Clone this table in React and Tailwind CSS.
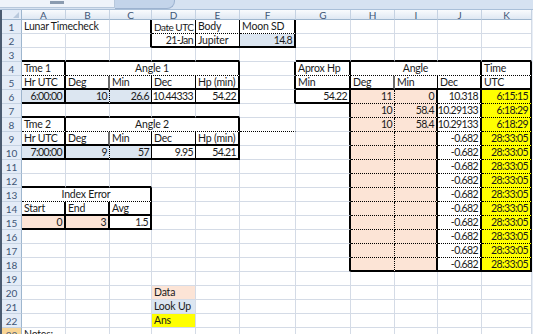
import React from 'react';

const COLS = ['A', 'B', 'C', 'D', 'E', 'F', 'G', 'H', 'I', 'J', 'K'];

const BLUE = 'bg-[#dce6f1]';
const PEACH = 'bg-[#fce4d6]';
const YELLOW = 'bg-[#ffff00]';

// border edges: g gridline, t thin, m medium, d dotted, s medium grey, n none
const RIGHT = {
  g: '[border-right:1px_solid_#d4dbe6]',
  t: '[border-right:1px_solid_#000]',
  m: '[border-right:2px_solid_#000]',
  s: '[border-right:2px_solid_#6b6b6b]',
  d: '[border-right:1px_dotted_#000]',
  n: '[border-right:1px_solid_transparent]',
};
const BOTTOM = {
  g: '[border-bottom:1px_solid_#d4dbe6]',
  t: '[border-bottom:1px_solid_#000]',
  m: '[border-bottom:2px_solid_#000]',
  d: '[border-bottom:1px_dotted_#000]',
};
const SPAN = { 1: '', 2: 'col-span-2', 3: 'col-span-3', 4: 'col-span-4' };
const ALIGN = {
  l: 'justify-start',
  r: 'justify-end',
  c: 'justify-center',
};
const TEXT = {
  l: 'text-[10.5px] tracking-[-0.2px]',
  c: 'text-[10.5px] tracking-[-0.2px]',
  r: 'text-[10.5px] tracking-[-0.6px]',
  narrow: 'text-[10px] tracking-[-0.5px]',
};

function buildCells() {
  const cells = {};
  for (let r = 1; r <= 23; r++) {
    COLS.forEach((c) => {
      cells[c + r] = { b: 'g', r: 'g', a: 'l' };
    });
  }
  const set = (ref, props) => Object.assign(cells[ref], props);
  const num = (ref, v, bg) => set(ref, { v, a: 'r', bg });

  // header block D1:F2
  set('A1', { v: 'Lunar Timecheck', r: 'n' });
  set('C1', { r: 'm' });
  set('C2', { r: 'm' });
  set('D1', { v: 'Date UTC', b: 'd', r: 't', font: 'narrow' });
  set('E1', { v: 'Body', b: 'd', r: 't' });
  set('F1', { v: 'Moon SD', b: 'd', r: 'm' });
  set('D2', { v: '21-Jan', a: 'r', b: 'm', r: 't' });
  set('E2', { v: 'Jupiter', b: 'm', r: 't' });
  set('F2', { v: '14.8', a: 'r', b: 'm', r: 'm', bg: BLUE });

  // angle boxes
  const angleBox = (top, label, time, vals) => {
    ['A', 'B', 'C', 'D', 'E'].forEach((c) => set(c + (top - 1), { b: 'm' }));
    set('A' + top, { v: label, b: 'd', r: 'm' });
    set('B' + top, { v: 'Angle ' + label.slice(-1), a: 'c', b: 'd', r: 'm', span: 4 });
    ['C', 'D', 'E'].forEach((c) => set(c + top, { skip: true }));
    const h = top + 1;
    set('A' + h, { v: 'Hr UTC', b: 'm', r: 'm' });
    set('B' + h, { v: 'Deg', b: 'm', r: 's' });
    set('C' + h, { v: 'Min', b: 'm', r: 't' });
    set('D' + h, { v: 'Dec', b: 'm', r: 't' });
    set('E' + h, { v: 'Hp (min)', b: 'm', r: 'm' });
    const d = top + 2;
    set('A' + d, { v: time, a: 'r', b: 'm', r: 'm', bg: BLUE });
    set('B' + d, { v: vals[0], a: 'r', b: 'm', r: 'd', bg: BLUE });
    set('C' + d, { v: vals[1], a: 'r', b: 'm', r: 't', bg: BLUE });
    set('D' + d, { v: vals[2], a: 'r', b: 'm', r: 't' });
    set('E' + d, { v: vals[3], a: 'r', b: 'm', r: 'm' });
  };
  angleBox(4, 'Tme 1', '6:00:00', ['10', '26.6', '10.44333', '54.22']);
  angleBox(8, 'Tme 2', '7:00:00', ['9', '57', '9.95', '54.21']);
  set('F8', { b: 'd' });

  // Aprox Hp box
  set('G3', { b: 'm' });
  ['F4', 'F5', 'F6'].forEach((k) => set(k, { r: 'm' }));
  set('G4', { v: 'Aprox Hp', b: 'd', r: 'm' });
  set('G5', { v: 'Min', b: 'm', r: 'm' });
  set('G6', { v: '54.22', a: 'r', b: 'm', r: 'm' });

  // result table H4:K18
  ['H3', 'I3', 'J3', 'K3'].forEach((k) => set(k, { b: 'm' }));
  set('H4', { v: 'Angle', a: 'c', b: 'd', r: 'm', span: 3 });
  set('I4', { skip: true });
  set('J4', { skip: true });
  set('K4', { v: 'Time', b: 'd', r: 'm' });
  set('H5', { v: 'Deg', b: 'm', r: 's' });
  set('I5', { v: 'Min', b: 'm', r: 't' });
  set('J5', { v: 'Dec', b: 'm', r: 'm' });
  set('K5', { v: 'UTC', b: 'm', r: 'm' });
  const rows = {
    6: ['11', '0', '10.318', '6:15:15'],
    7: ['10', '58.4', '10.29133', '6:18:29'],
    8: ['10', '58.4', '10.29133', '6:18:29'],
  };
  for (let r = 6; r <= 18; r++) {
    const vals = rows[r] || ['', '', '-0.682', '28:33:05'];
    const b = r === 18 ? 'm' : 'd';
    set('G' + r, { r: 'm' });
    set('H' + r, { v: vals[0], a: 'r', b, r: 'd', bg: PEACH });
    set('I' + r, { v: vals[1], a: 'r', b, r: 'm', bg: PEACH });
    set('J' + r, { v: vals[2], a: 'r', b, r: 'm' });
    set('K' + r, { v: vals[3], a: 'r', b, r: 'm', bg: YELLOW });
  }

  // index error
  ['A12', 'B12', 'C12'].forEach((k) => set(k, { b: 'm' }));
  set('A13', { v: 'Index Error', a: 'c', b: 'd', r: 'm', span: 3 });
  set('B13', { skip: true });
  set('C13', { skip: true });
  set('A14', { v: 'Start', b: 'm', r: 'm' });
  set('B14', { v: 'End', b: 'm', r: 'm' });
  set('C14', { v: 'Avg', b: 'm', r: 'm' });
  num('A15', '0', PEACH);
  num('B15', '3', PEACH);
  num('C15', '1.5');
  ['A15', 'B15', 'C15'].forEach((k) => set(k, { b: 'm', r: 'm' }));

  // legend
  set('D20', { v: 'Data', bg: PEACH });
  set('D21', { v: 'Look Up', bg: BLUE });
  set('D22', { v: 'Ans', bg: YELLOW });
  set('A23', { v: 'Notes:' });

  return cells;
}

const cells = buildCells();

function Cell({ cell }) {
  return (
    <div
      className={`flex items-center overflow-visible whitespace-nowrap px-[2px] leading-none text-[#1a1a1a] ${
        TEXT[cell.font || cell.a]
      } ${RIGHT[cell.r]} ${BOTTOM[cell.b]} ${ALIGN[cell.a]} ${SPAN[cell.span || 1]} ${cell.bg || ''}`}
    >
      {cell.v}
    </div>
  );
}

export default function App() {
  const rows = Array.from({ length: 23 }, (_, i) => i + 1);

  return (
    <div className="w-[533px] h-[334px] overflow-hidden bg-white font-['Lato','Open_Sans',sans-serif]">
      {/* formula bar edge */}
      <div className="flex h-[10px] bg-[#d6e2f1] border-b border-[#a9bfd8]">
        <div className="w-[115px] h-[8px] bg-[#eef3fa] border-r border-b border-[#b7c8dc] flex justify-center items-start">
          <div className="w-[14px] h-[3px] mt-[1px] bg-[#8a9bb0]" />
        </div>
        <div className="w-[60px] h-[9px] rounded-br-[8px] bg-[#c3d4ea] border-b border-r border-[#9cb2cf]" />
      </div>

      <div className="flex">
        <div className="w-[2px] h-[324px] bg-[#4b5b70]" />
        <div className="grid grid-cols-[20px_44px_44px_42px_44px_44px_56px_55px_44px_43px_44px_50px] grid-rows-[10px_repeat(23,14px)]">
          {/* corner */}
          <div className="relative bg-[#e4ecf7] border-r border-b border-[#9eb6ce]">
            <div className="absolute right-[2px] bottom-[1px] w-0 h-0 border-l-[6px] border-l-transparent border-b-[6px] border-b-[#b9c9dd]" />
          </div>
          {COLS.map((c) => (
            <div
              key={c}
              className="flex items-center justify-center bg-linear-to-b from-[#f9fbfd] to-[#dfe8f3] border-r border-r-[#c5d2e2] border-b border-b-[#9eb6ce] text-[10px] leading-none text-[#3e5575]"
            >
              {c}
            </div>
          ))}

          {rows.map((r) => (
            <React.Fragment key={r}>
              <div
                className={`flex items-center justify-center border-r border-r-[#9eb6ce] border-b border-b-[#c5d2e2] text-[10px] leading-none text-[#3e5575] ${
                  r === 23 ? 'bg-[#f8d595]' : 'bg-[#e4ecf7]'
                }`}
              >
                {r}
              </div>
              {COLS.map((c) => {
                const cell = cells[c + r];
                if (cell.skip) return null;
                return <Cell key={c} cell={cell} />;
              })}
            </React.Fragment>
          ))}
        </div>
        <div className="w-[1px] h-[324px] bg-[#e8eef6]" />
      </div>
    </div>
  );
}
